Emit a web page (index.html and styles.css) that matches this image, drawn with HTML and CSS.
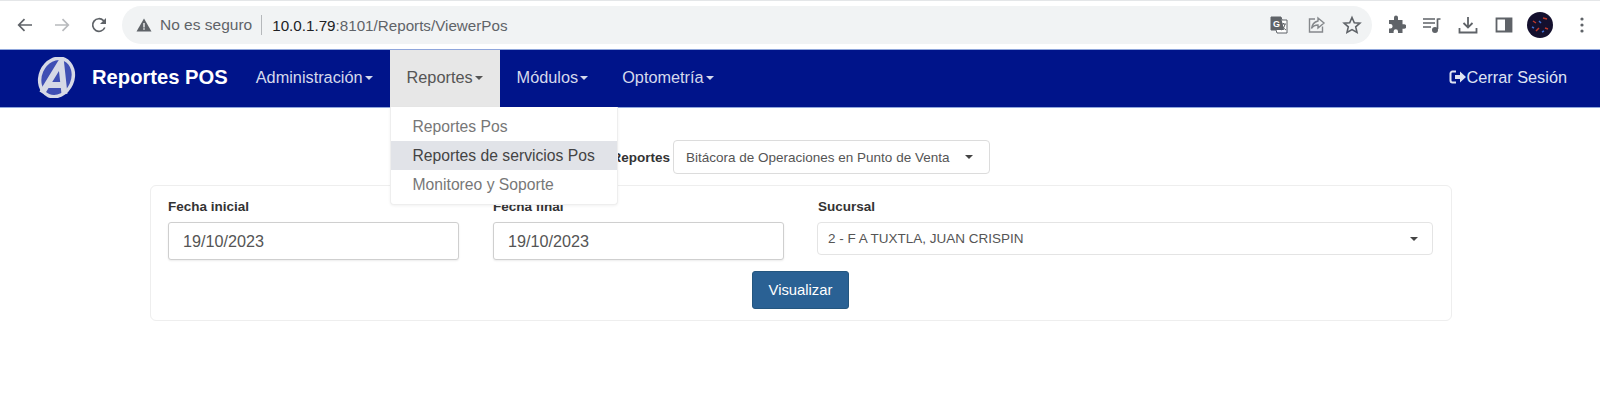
FILE: index.html
```html
<!DOCTYPE html>
<html lang="es">
<head>
	<meta charset="UTF-8">
	<title>Reportes POS</title>
	<link rel="stylesheet" href="styles.css">
</head>
<body>
	<div class="chrome">
		<div class="chrome-nav">
			<svg class="ico" viewBox="0 0 20 20"><path d="M17 10H4M9.500 4.200 3.700 10l5.800 5.800" fill="none" stroke="#5f6368" stroke-width="1.700"/></svg>
			<svg class="ico" viewBox="0 0 20 20"><path d="M3 10h13M10.500 4.200l5.800 5.800-5.800 5.800" fill="none" stroke="#b8babd" stroke-width="1.700"/></svg>
			<svg class="ico" viewBox="0 0 20 20"><path d="M15.800 12.500A6.300 6.300 0 1 1 14.500 5.600L16.500 7.500" fill="none" stroke="#5f6368" stroke-width="1.700"/><path d="M17 3v6h-6z" fill="#5f6368"/></svg>
		</div>
		<div class="omnibox">
			<svg class="warn" viewBox="0 0 16 16"><path d="M8 1.500 15.500 14.500H.500z" fill="#5f6368"/><path d="M7.300 6h1.400v4.500H7.300zM7.300 11.300h1.400v1.400H7.300z" fill="#f1f3f4"/></svg>
			<span class="secure">No es seguro</span>
			<span class="url"><b>10.0.1.79</b>:8101/Reports/ViewerPos</span>
			<span class="omni-icons">
				<svg class="ico" viewBox="0 0 20 20"><path d="M2 2h10l1 3h5v13H8l-1-3H2z" fill="#fff" stroke="#5f6368"/><path d="M2 2h10l3 13H2z" fill="#5f6368"/><text x="4" y="12" class="g">G</text><path d="M12 9h5M14.500 8v1M16 9c-.5 3-2 5-3.500 6M13.500 11c.5 1.500 2 3 3.500 4" fill="none" stroke="#5f6368"/></svg>
				<svg class="ico" viewBox="0 0 20 20"><path d="M9 4H3.500v13h13v-5.500" fill="none" stroke="#85888c" stroke-width="1.400"/><path d="M12 3l6 5-6 5v-3c-3 0-5 1-6.500 3.500C6 9.500 8 7 12 6z" fill="none" stroke="#85888c" stroke-width="1.400"/></svg>
				<svg class="ico" viewBox="0 0 20 20"><path d="M10 2.500l2.300 5.200 5.600.5-4.200 3.700 1.300 5.500L10 14.600 5 17.400l1.300-5.500L2.100 8.200l5.600-.5z" fill="none" stroke="#5f6368" stroke-width="1.600"/></svg>
			</span>
		</div>
		<div class="chrome-tools">
			<svg class="ico" viewBox="0 0 20 20"><path d="M8 2.500a2 2 0 0 1 4 0V5h4.500v4.200H18a2.300 2.300 0 0 1 0 4.600h-1.500V18H12v-1.500a2.200 2.200 0 0 0-4.400 0V18H3v-4.500h1.300a2.300 2.300 0 0 0 0-4.600H3V5h5z" fill="#5f6368"/></svg>
			<svg class="ico" viewBox="0 0 20 20"><path d="M1 4h12M1 8h12M1 12h8" stroke="#5f6368" stroke-width="1.500"/><path d="M15.500 4h3M15.500 3.500V14" stroke="#5f6368" stroke-width="1.700" fill="none"/><circle cx="13" cy="15" r="3" fill="#5f6368"/></svg>
			<svg class="ico" viewBox="0 0 20 20"><path d="M10 2v10M5.500 8l4.500 4.500L14.500 8M1.500 13v4.500h17V13" fill="none" stroke="#5f6368" stroke-width="1.800"/></svg>
			<svg class="ico" viewBox="0 0 20 20"><path d="M2.500 3.500h15v13h-15z" fill="none" stroke="#5f6368" stroke-width="1.800"/><path d="M11 3.500h6.500v13H11z" fill="#5f6368"/></svg>
			<svg class="avatar" viewBox="0 0 26 26"><circle cx="13" cy="13" r="13" fill="#14102e"/><path d="M6 9l3 2M16 6l4 1M9 19l3-3M18 16l3 1" stroke="#c0392b" stroke-width="1.500"/><path d="M12 9l2 2M5 15l2 1M15 20l2-1" stroke="#3f6fd0" stroke-width="1.500"/></svg>
			<svg class="dots" viewBox="0 0 4 16"><circle cx="2" cy="2" r="1.600"/><circle cx="2" cy="8" r="1.600"/><circle cx="2" cy="14" r="1.600"/></svg>
		</div>
	</div>

	<nav class="navbar">
		<svg class="logo" viewBox="0 0 41 41">
			<ellipse cx="20.500" cy="20.500" rx="18" ry="21.500" transform="rotate(24 20.500 20.500)" fill="#d6d9e6"/>
			<ellipse cx="20.500" cy="20.500" rx="14.500" ry="18" transform="rotate(24 20.500 20.500)" fill="#3f4fb4"/>
			<path d="M6 36 25 5 28.500 37M12 28H29" fill="none" stroke="#d6d9e6" stroke-width="6"/>
		</svg>
		<span class="brand">Reportes POS</span>
		<ul class="menu">
			<li><a>Administración<i class="caret"></i></a></li>
			<li class="open">
				<a>Reportes<i class="caret"></i></a>
				<div class="dropdown">
					<a>Reportes Pos</a>
					<a class="hover">Reportes de servicios Pos</a>
					<a>Monitoreo y Soporte</a>
				</div>
			</li>
			<li><a>Módulos<i class="caret"></i></a></li>
			<li><a>Optometría<i class="caret"></i></a></li>
		</ul>
		<a class="logout">
			<svg viewBox="0 0 18 16"><path d="M7 2.500H3.500a2 2 0 0 0-2 2v7a2 2 0 0 0 2 2H7" fill="none" stroke="#dfe3f2" stroke-width="2"/><path d="M6 6h5V2.500L17 8l-6 5.500V10H6z" fill="#dfe3f2"/></svg>Cerrar Sesión
		</a>
	</nav>

	<main class="content">
		<div class="report-row">
			<label class="report-label">Tipo de Reportes</label>
			<div class="select report-select"><span>Bitácora de Operaciones en Punto de Venta</span><i class="caret"></i></div>
		</div>
		<section class="panel">
			<div class="fields">
				<div class="field date">
					<label>Fecha inicial</label>
					<input type="text" value="19/10/2023">
				</div>
				<div class="field date">
					<label>Fecha final</label>
					<input type="text" value="19/10/2023">
				</div>
				<div class="field branch">
					<label>Sucursal</label>
					<div class="select"><span>2 - F A TUXTLA, JUAN CRISPIN</span><i class="caret"></i></div>
				</div>
			</div>
			<button class="btn">Visualizar</button>
		</section>
	</main>
</body>
</html>
```

FILE: styles.css
```css
* { box-sizing: border-box; margin: 0; padding: 0; }
html, body { height: 100%; }
body { background: #fff; font-family: "Liberation Sans", Arial, sans-serif; color: #333; overflow: hidden; }

/* browser bar */
.chrome { height: 49px; display: flex; align-items: center; background: #fff; border-top: 1px solid #e4e6e8; }
.chrome-nav { width: 122px; display: flex; align-items: center; gap: 17px; padding-left: 15px; }
.ico { width: 20px; height: 20px; display: block; flex: none; }
.omnibox { width: 1250px; height: 38px; border-radius: 19px; background: #f1f3f4; display: flex; align-items: center; padding-left: 14px; font-size: 15.500px; color: #5f6368; }
.warn { width: 16px; height: 16px; margin-right: 8px; }
.secure { padding-right: 9px; border-right: 1px solid #b5b8bb; line-height: 20px; }
.url { margin-left: 10px; font-size: 15.200px; }
.url b { font-weight: normal; color: #202124; }
.omni-icons { margin-left: auto; display: flex; gap: 16.500px; padding-right: 10px; }
.g { font: bold 9px "Liberation Sans", sans-serif; fill: #fff; }
.chrome-tools { flex: 1; display: flex; align-items: center; gap: 16px; padding-left: 14px; }
.avatar { width: 26px; height: 26px; margin: 0 -3px; }
.dots { width: 4px; height: 16px; fill: #5f6368; margin-left: 14px; }

/* navbar */
.navbar { height: 59px; display: flex; align-items: center; background: #00148a; border-top: 1px solid #8fa6dc; border-bottom: 1px solid #8fa6dc; padding: 0 33px 2px 36px; }
.logo { width: 41px; height: 41px; flex: none; }
.brand { margin-left: 15px; font-size: 20.200px; font-weight: bold; color: #fff; }
.menu { display: flex; list-style: none; align-self: stretch; margin: 0 0 -2px 11px; }
.menu > li { position: relative; display: flex; }
.menu > li > a { display: flex; align-items: center; padding: 0 17px 3px; font-size: 16.300px; color: #d5d9ec; }
.menu > li.open > a { background: #e7e7e7; color: #555; }
.menu .caret { border-top-color: currentColor; margin-left: 2px; margin-top: 2px; }
.caret { display: inline-block; width: 0; height: 0; border-top: 4px solid #444; border-left: 4px solid transparent; border-right: 4px solid transparent; }
.dropdown { position: absolute; top: 100%; left: 0; width: 228px; height: 98px; padding-top: 5px; background: #fff; border: 1px solid #eeeeee; border-top: 0; border-radius: 0 0 4px 4px; box-shadow: 0 1px 3px rgba(0,0,0,.06); z-index: 5; }
.dropdown a { display: block; height: 29px; line-height: 29px; padding-left: 22px; font-size: 15.700px; color: #777; }
.dropdown a.hover { background: #e1e3e8; color: #444; }
.logout { margin-left: auto; display: flex; align-items: center; padding-bottom: 1px; font-size: 16.300px; color: #dfe3f2; }
.logout svg { width: 18px; height: 16px; }

/* page */
.content { padding-top: 32px; }
.report-row { display: flex; align-items: center; height: 34px; padding-left: 560px; }
.report-label { width: 110px; margin-right: 3px; font-size: 13.500px; font-weight: bold; white-space: nowrap; text-align: right; direction: rtl; color: #333; }
.select { display: flex; align-items: center; justify-content: space-between; background: #fff; border: 1px solid #dcdcdc; border-radius: 4px; font-size: 13.500px; color: #555; }
.report-select { width: 317px; height: 34px; padding: 0 16px 0 12px; }
.panel { width: 1302px; height: 136px; margin: 11px 0 0 150px; padding: 12px 17px 0; border: 1px solid #eeeeee; border-radius: 6px; background: #fff; }
.fields { display: flex; align-items: flex-start; }
.field label { display: block; height: 24px; line-height: 17px; font-size: 13.500px; font-weight: bold; color: #333; }
.date { width: 324px; }
.date:first-child { width: 325px; }
.date input { display: block; width: 291px; height: 38px; padding: 0 14px; border: 1px solid #cfcfcf; border-radius: 3px; box-shadow: 0 1px 2px rgba(0,0,0,.08); font: 16.200px "Liberation Sans", Arial, sans-serif; color: #555; }
.branch { width: 616px; }
.branch label { padding-left: 1px; }
.branch .select { height: 33px; padding: 0 14px 0 10px; border-color: #e4e4e4; }
.btn { display: block; width: 97px; height: 38px; margin: 11px 0 0 584px; background: #2a6194; border: 1px solid #24567f; border-radius: 3px; color: #fff; font: 14.800px "Liberation Sans", Arial, sans-serif; }
```
